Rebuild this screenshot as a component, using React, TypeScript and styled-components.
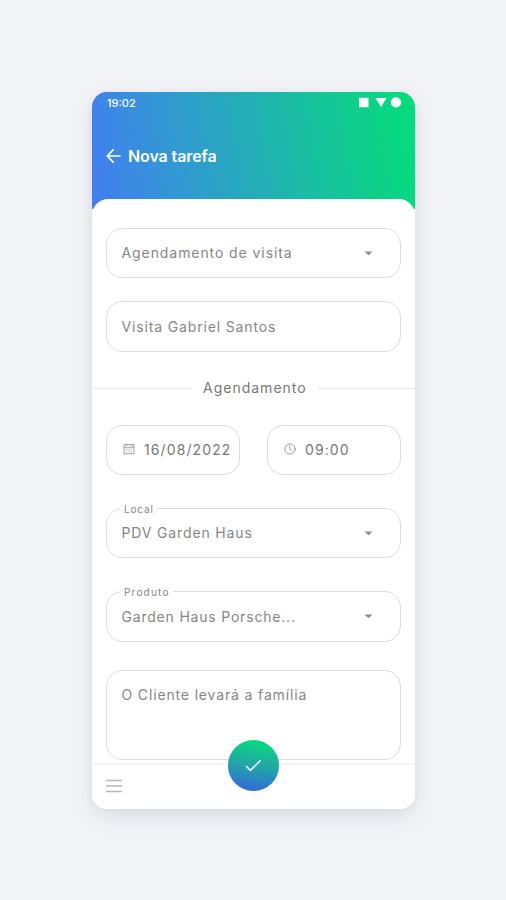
import React from "react";
import styled, { createGlobalStyle } from "styled-components";

const GlobalStyle = createGlobalStyle`
  * { box-sizing: border-box; }
  body { margin: 0; background: #f2f4f8; font-family: Inter, "Liberation Sans", sans-serif; }
`;

const Page = styled.main`
  height: 900px;
  padding: 92px 91px 91px 92px;
  background: #f2f4f8;
`;

const Phone = styled.section`
  width: 323px;
  height: 717px;
  display: flex;
  flex-direction: column;
  overflow: hidden;
  border-radius: 15px;
  background: linear-gradient(79deg, #427cf2 0%, #3594d9 22%, #26aabc 46%, #19bfa2 66%, #0ed08a 84%, #03dd7b 100%) top / 100% 117px no-repeat, #fff;
`;

const Shadow = styled.div`
  border-radius: 15px;
  box-shadow: 0 8px 22px rgba(60, 70, 90, 0.13), 0 1px 8px rgba(60, 70, 90, 0.04);
`;

const StatusBar = styled.div`
  flex: none;
  height: 21px;
  padding: 0 13px 0 15px;
  display: flex;
  align-items: center;
  justify-content: space-between;
  color: #fff;
  font-size: 11px;
  font-weight: 500;
`;

const TitleBar = styled.header`
  flex: none;
  height: 86px;
  padding: 0 0 0 14px;
  display: flex;
  align-items: center;
  gap: 6px;
  color: #fff;
`;

const Title = styled.h1`
  margin: 0;
  font-size: 16px;
  font-weight: 600;
  letter-spacing: -0.1px;
`;

const Sheet = styled.div`
  flex: 1;
  min-height: 0;
  display: flex;
  flex-direction: column;
  border-radius: 16px 16px 0 0;
  background: #fff;
`;

const Form = styled.form`
  flex: none;
  height: 564px;
  padding: 29px 14px 0;
`;

const Field = styled.div<{ $gap?: number; $height?: number }>`
  position: relative;
  height: ${(p) => p.$height ?? 50}px;
  margin-bottom: ${(p) => p.$gap ?? 0}px;
  padding: 0 27px 0 14.5px;
  display: flex;
  align-items: center;
  justify-content: space-between;
  border: 1.5px solid #dcdcde;
  border-radius: 16px;
`;

const Value = styled.span<{ $spacing?: number; $dark?: boolean }>`
  color: ${(p) => (p.$dark ? "#777" : "#868686")};
  font-size: 14px;
  line-height: 18px;
  letter-spacing: ${(p) => p.$spacing ?? 0.85}px;
  white-space: nowrap;
`;

const FieldLabel = styled.span<{ $spacing?: number }>`
  position: absolute;
  top: -6px;
  left: 13px;
  padding: 0 3px 0 4px;
  background: #fff;
  color: #858585;
  font-size: 10px;
  line-height: 13px;
  letter-spacing: ${(p) => p.$spacing ?? 0.85}px;
`;

const Divider = styled.div`
  height: 20px;
  margin: 0 -14px 27px;
  display: flex;
  align-items: center;
  gap: 11px;
`;

const Rule = styled.span`
  flex: 1;
  height: 1px;
  background: #e6e6e8;

  &:first-child {
    flex: none;
    width: 100px;
  }
`;

const DateRow = styled.div`
  display: grid;
  grid-template-columns: 134px 134px;
  justify-content: space-between;
  margin-bottom: 33px;
`;

const IconField = styled(Field)`
  padding: 0 0 0 15.5px;
  justify-content: flex-start;
  gap: 9.5px;

  svg {
    margin-bottom: 2px;
  }
`;

const NotesField = styled(Field)`
  align-items: flex-start;
  padding-top: 15px;
`;

const BottomBar = styled.nav`
  position: relative;
  flex: 1;
  padding: 14px 14px 0;
  border-top: 2px solid #f5f5f7;

  > svg {
    display: block;
  }
`;

const Confirm = styled.button`
  position: absolute;
  top: -25px;
  left: 136px;
  width: 50.5px;
  height: 50.5px;
  padding: 0;
  display: grid;
  place-items: center;
  border: 0;
  border-radius: 50%;
  background: linear-gradient(190deg, #07d982 8%, #22a8a4 48%, #3366dc 96%);
`;

const Caret = () => (
  <svg width="9" height="5" viewBox="0 0 9 5">
    <path d="M0.5 0.5h8l-4 3.8z" fill="#8a8a8a" />
  </svg>
);

const SystemIcons = () => (
  <svg width="44" height="12" viewBox="0 0 44 12">
    <g fill="#fff">
      <rect x="1" y="0.7" width="9.5" height="9.5" rx="0.5" />
      <path d="M17.5 1h11l-5.5 9z" />
      <circle cx="38" cy="5.4" r="5.1" />
    </g>
  </svg>
);

const BackArrow = () => (
  <svg width="16" height="16" viewBox="0 0 16 16" fill="none" stroke="#fff" strokeWidth="1.7" strokeLinecap="round" strokeLinejoin="round">
    <path d="M14 8H1.4M7.2 1.8L1.2 8l6 6.2" />
  </svg>
);

const CalendarIcon = () => (
  <svg width="12" height="12" viewBox="0 0 12 12" fill="none" stroke="#858585" strokeWidth="0.8">
    <path d="M1 1.7h10v9H1zM1 4.2h10M3.3 0.5v2M8.7 0.5v2" />
    <path d="M3 6h6.3M3 8.2h6.3" strokeDasharray="1.2 1.2" />
  </svg>
);

const ClockIcon = () => (
  <svg width="12" height="12" viewBox="0 0 12 12" fill="none" stroke="#858585" strokeWidth="0.8" strokeLinecap="round">
    <circle cx="6" cy="6" r="5.1" />
    <path d="M5.6 2.7V6l2.1 1.4" />
  </svg>
);

const CheckIcon = () => (
  <svg width="17" height="13" viewBox="0 0 17 13" fill="none" stroke="#dff5fb" strokeWidth="1.5" strokeLinecap="round" strokeLinejoin="round">
    <path d="M1.4 7.4l4 4L15.3 1.6" />
  </svg>
);

const MenuIcon = () => (
  <svg width="16" height="14" viewBox="0 0 16 14">
    <path d="M0 1.5h16M0 7h16M0 12.5h16" stroke="#b5b5b5" strokeWidth="1.5" />
  </svg>
);

export default function App() {
  return (
    <Page>
      <GlobalStyle />
      <Shadow>
        <Phone>
          <StatusBar>
            <span>19:02</span>
            <SystemIcons />
          </StatusBar>
          <TitleBar>
            <BackArrow />
            <Title>Nova tarefa</Title>
          </TitleBar>
          <Sheet>
            <Form>
              <Field $gap={23}>
                <Value $spacing={0.92}>Agendamento de visita</Value>
                <Caret />
              </Field>
              <Field $gap={26} $height={51}>
                <Value>Visita Gabriel Santos</Value>
              </Field>
              <Divider>
                <Rule />
                <Value $dark $spacing={1}>Agendamento</Value>
                <Rule />
              </Divider>
              <DateRow>
                <IconField>
                  <CalendarIcon />
                  <Value $dark $spacing={1.1}>16/08/2022</Value>
                </IconField>
                <IconField>
                  <ClockIcon />
                  <Value $dark $spacing={1.1}>09:00</Value>
                </IconField>
              </DateRow>
              <Field $gap={33}>
                <FieldLabel>Local</FieldLabel>
                <Value>PDV Garden Haus</Value>
                <Caret />
              </Field>
              <Field $gap={28} $height={51}>
                <FieldLabel $spacing={1.2}>Produto</FieldLabel>
                <Value $spacing={0.8}>Garden Haus Porsche...</Value>
                <Caret />
              </Field>
              <NotesField $height={90}>
                <Value>O Cliente levará a família</Value>
              </NotesField>
            </Form>
            <BottomBar>
              <MenuIcon />
              <Confirm type="button" aria-label="Confirmar">
                <CheckIcon />
              </Confirm>
            </BottomBar>
          </Sheet>
        </Phone>
      </Shadow>
    </Page>
  );
}
